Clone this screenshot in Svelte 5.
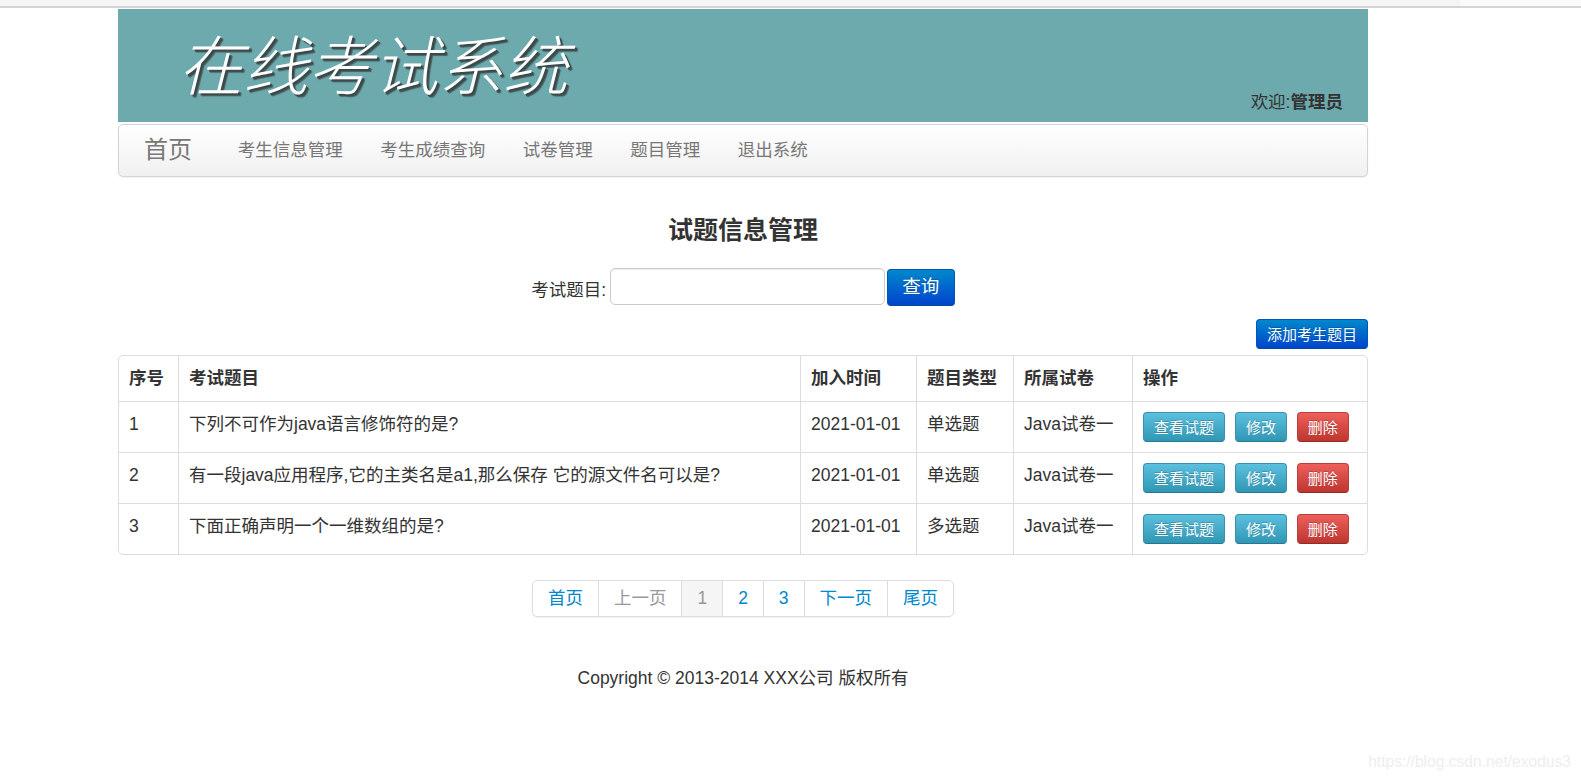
<script>
	const navItems = ['考生信息管理', '考生成绩查询', '试卷管理', '题目管理', '退出系统'];

	const questions = [
		{ id: 1, title: '下列不可作为java语言修饰符的是?', time: '2021-01-01', type: '单选题', paper: 'Java试卷一' },
		{ id: 2, title: '有一段java应用程序,它的主类名是a1,那么保存 它的源文件名可以是?', time: '2021-01-01', type: '单选题', paper: 'Java试卷一' },
		{ id: 3, title: '下面正确声明一个一维数组的是?', time: '2021-01-01', type: '多选题', paper: 'Java试卷一' }
	];

	const pages = [
		{ label: '首页' },
		{ label: '上一页', disabled: true },
		{ label: '1', active: true },
		{ label: '2' },
		{ label: '3' },
		{ label: '下一页' },
		{ label: '尾页' }
	];

	let keyword = $state('');
</script>

<div class="browser-strip"></div>

<div class="container">
	<header class="banner">
		<div class="logo">在线考试系统</div>
		<div class="welcome">欢迎:<strong>管理员</strong></div>
	</header>

	<nav class="navbar">
		<a class="brand" href="#home">首页</a>
		<ul class="nav">
			{#each navItems as item}
				<li><a href="#item">{item}</a></li>
			{/each}
		</ul>
	</nav>

	<h3 class="title">试题信息管理</h3>

	<form class="search" onsubmit={(e) => e.preventDefault()}>
		<label for="keyword">考试题目:</label>
		<input id="keyword" type="text" bind:value={keyword} />
		<button type="submit" class="btn primary large">查询</button>
	</form>

	<div class="toolbar">
		<button type="button" class="btn primary">添加考生题目</button>
	</div>

	<table class="grid">
		<colgroup>
			<col style="width: 59px" />
			<col style="width: 622px" />
			<col style="width: 116px" />
			<col style="width: 97px" />
			<col style="width: 119px" />
			<col />
		</colgroup>
		<thead>
			<tr>
				<th>序号</th>
				<th>考试题目</th>
				<th>加入时间</th>
				<th>题目类型</th>
				<th>所属试卷</th>
				<th>操作</th>
			</tr>
		</thead>
		<tbody>
			{#each questions as q (q.id)}
				<tr>
					<td>{q.id}</td>
					<td>{q.title}</td>
					<td>{q.time}</td>
					<td>{q.type}</td>
					<td>{q.paper}</td>
					<td class="actions">
						<button type="button" class="btn info">查看试题</button>
						<button type="button" class="btn info">修改</button>
						<button type="button" class="btn danger">删除</button>
					</td>
				</tr>
			{/each}
		</tbody>
	</table>

	<div class="pagination">
		{#each pages as page}
			<a href="#page" class:disabled={page.disabled} class:active={page.active}>{page.label}</a>
		{/each}
	</div>

	<footer class="copyright">Copyright © 2013-2014 XXX公司 版权所有</footer>
</div>

<div class="watermark">https://blog.csdn.net/exodus3</div>

<style>
	:global(body) {
		margin: 0;
		background: #fff;
		color: #333;
		font-family: 'Liberation Sans', 'Noto Sans CJK SC', sans-serif;
		font-size: 17.5px;
		line-height: 1.43;
		overflow: hidden;
	}

	.browser-strip {
		height: 8px;
		box-sizing: border-box;
		background: linear-gradient(to right, #f5f5f5 1460px, #fafafa 1460px);
		border-bottom: 2px solid #d4d4d4;
	}

	.container {
		width: 1250px;
		margin: 1px 0 0 118px;
	}

	.banner {
		height: 113px;
		background: #6daaad;
		position: relative;
		display: flex;
		align-items: flex-end;
		padding: 0 25px 7px 65px;
		box-sizing: border-box;
	}

	.logo {
		position: absolute;
		left: 60px;
		top: 17px;
		font-size: 65px;
		line-height: 84px;
		font-style: italic;
		font-weight: 300;
		color: #fff;
		text-shadow: 2px 2px 0 #3b4a4b, 3px 3px 1px #4a5f60;
		white-space: nowrap;
	}

	.welcome {
		margin-left: auto;
		color: #333;
	}

	.navbar {
		display: flex;
		align-items: center;
		height: 53px;
		margin-top: 2px;
		box-sizing: border-box;
		border: 1px solid #d4d4d4;
		border-radius: 5px;
		background: linear-gradient(to bottom, #fff, #f0f0f0);
		box-shadow: 0 1px 2px rgba(0, 0, 0, 0.06);
		padding-left: 25px;
	}

	.brand {
		font-size: 24px;
		color: #777;
		text-decoration: none;
		margin-right: 27px;
	}

	.nav {
		display: flex;
		list-style: none;
		margin: 0;
		padding: 0;
	}

	.nav a {
		display: block;
		padding: 0 18.75px;
		color: #777;
		text-decoration: none;
	}

	.title {
		margin: 35px 0 0;
		text-align: center;
		font-size: 25px;
		line-height: 36px;
		font-weight: 700;
		color: #333;
	}

	.search {
		display: flex;
		justify-content: center;
		align-items: center;
		margin-top: 19px;
	}

	.search label {
		margin-right: 3.5px;
		padding-top: 8px;
	}

	.search input {
		width: 275px;
		height: 37px;
		box-sizing: border-box;
		border: 1px solid #ccc;
		border-radius: 5px;
		box-shadow: inset 0 1px 1px rgba(0, 0, 0, 0.075);
		outline: none;
		margin-right: 2px;
	}

	.btn {
		font-family: inherit;
		height: 30px;
		padding: 0 10px;
		font-size: 15px;
		line-height: 1;
		color: #fff;
		border-radius: 4px;
		cursor: pointer;
		text-shadow: 0 -1px 0 rgba(0, 0, 0, 0.2);
	}

	.btn.large {
		height: 37px;
		width: 68px;
		margin-top: 2px;
		padding: 0;
		font-size: 18.5px;
	}

	.btn.primary {
		background: linear-gradient(to bottom, #0088cc, #0044cc);
		border: 1px solid #0055bb;
		border-bottom-color: #004a99;
	}

	.btn.info {
		background: linear-gradient(to bottom, #5bc0de, #2f96b4);
		border: 1px solid #3a90ad;
		border-bottom-color: #2a7690;
	}

	.btn.danger {
		background: linear-gradient(to bottom, #ee5f5b, #bd362f);
		border: 1px solid #b8403a;
		border-bottom-color: #942a25;
	}

	.toolbar {
		display: flex;
		justify-content: flex-end;
		margin-top: 13px;
	}

	.grid {
		width: 100%;
		table-layout: fixed;
		border-collapse: separate;
		border-spacing: 0;
		margin-top: 6px;
		border: 1px solid #ddd;
		border-radius: 5px;
	}

	.grid th,
	.grid td {
		text-align: left;
		padding: 0 10px;
		border-left: 1px solid #ddd;
		border-top: 1px solid #ddd;
		vertical-align: top;
		font-weight: 400;
		white-space: nowrap;
	}

	.grid th {
		height: 45px;
		line-height: 45px;
		font-weight: 700;
		border-top: 0;
	}

	.grid td {
		height: 51px;
		padding-top: 10px;
		box-sizing: border-box;
		line-height: 25px;
	}

	.grid th:first-child,
	.grid td:first-child {
		border-left: 0;
	}

	.actions .btn + .btn {
		margin-left: 5px;
	}

	.pagination {
		display: flex;
		width: fit-content;
		margin: 25px auto 0;
		border: 1px solid #ddd;
		border-radius: 5px;
		box-shadow: 0 1px 2px rgba(0, 0, 0, 0.05);
	}

	.pagination a {
		padding: 0 15px;
		line-height: 35px;
		color: #0088cc;
		text-decoration: none;
		border-left: 1px solid #ddd;
	}

	.pagination a:first-child {
		border-left: 0;
	}

	.pagination a.disabled {
		color: #999;
	}

	.pagination a.active {
		color: #999;
		background: #f5f5f5;
	}

	.copyright {
		margin-top: 49px;
		text-align: center;
	}

	.watermark {
		position: absolute;
		right: 10px;
		bottom: 5px;
		font-size: 15.6px;
		color: #eeeeee;
	}
</style>
